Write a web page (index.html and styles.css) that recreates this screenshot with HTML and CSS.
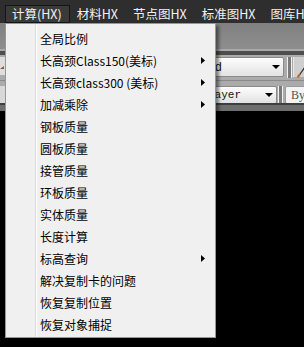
FILE: index.html
```html
<!DOCTYPE html>
<html lang="zh-CN">
<head>
<meta charset="utf-8">
<title>计算(HX)</title>
<link rel="stylesheet" href="styles.css">
</head>
<body>
<div class="app">
  <nav class="menubar">
    <span class="mi active">计算(HX)</span>
    <span class="mi">材料HX</span>
    <span class="mi">节点图HX</span>
    <span class="mi">标准图HX</span>
    <span class="mi">图库HX</span>
  </nav>
  <div class="toolbar">
    <div class="band-top"></div>
    <div class="band-line"></div>
    <div class="band-dark"></div>
    <div class="tb-row row1">
      <span class="left-btn">
        <svg width="6" height="18" viewBox="0 0 6 18"><polygon points="0,11 4,8 4,11" fill="#a0521e"/></svg>
      </span>
      <div class="combo combo1"><span class="ctext">Standard</span><i class="caret"></i></div>
      <div class="sep sep1"></div>
      <div class="tbtn">
        <svg width="12" height="14" viewBox="0 0 12 14"><line x1="2" y1="12" x2="9" y2="2" stroke="#333" stroke-width="1.3"/><line x1="1.5" y1="12.5" x2="4" y2="9" stroke="#c86414" stroke-width="2"/></svg>
      </div>
    </div>
    <div class="tb-row row2">
      <span class="left-box"></span>
      <div class="combo combo2"><span class="ctext mono">Layer</span><i class="caret"></i></div>
      <div class="sep sep2"></div>
      <div class="combo combo3"><span class="ctext serif">ByLayer</span></div>
    </div>
    <div class="band-bottom"></div>
  </div>
  <div class="canvas"></div>

  <div class="dropdown">
    <div class="item">全局比例</div>
    <div class="item">长高颈Class150(美标)<svg class="arrow" width="4" height="7" viewBox="0 0 4 7"><polygon points="0,0 4,3.5 0,7" fill="#000"/></svg></div>
    <div class="item">长高颈class300 (美标)<svg class="arrow" width="4" height="7" viewBox="0 0 4 7"><polygon points="0,0 4,3.5 0,7" fill="#000"/></svg></div>
    <div class="item">加减乘除<svg class="arrow" width="4" height="7" viewBox="0 0 4 7"><polygon points="0,0 4,3.5 0,7" fill="#000"/></svg></div>
    <div class="item">钢板质量</div>
    <div class="item">圆板质量</div>
    <div class="item">接管质量</div>
    <div class="item">环板质量</div>
    <div class="item">实体质量</div>
    <div class="item">长度计算</div>
    <div class="item">标高查询<svg class="arrow" width="4" height="7" viewBox="0 0 4 7"><polygon points="0,0 4,3.5 0,7" fill="#000"/></svg></div>
    <div class="item">解决复制卡的问题</div>
    <div class="item">恢复复制位置</div>
    <div class="item">恢复对象捕捉</div>
  </div>
</div>
</body>
</html>
```
FILE: styles.css
```css
html, body {
  margin: 0;
  padding: 0;
  background: #000;
}
.app {
  position: relative;
  width: 304px;
  height: 347px;
  overflow: hidden;
  background: #000;
  font-family: "Noto Sans CJK SC", "Noto Sans", sans-serif;
}

/* menu bar */
.menubar {
  display: flex;
  align-items: flex-start;
  height: 23px;
  box-sizing: border-box;
  padding-left: 5px;
  background: #2e2e2e;
  white-space: nowrap;
}
.mi {
  flex: none;
  margin-top: 5px;
  height: 18px;
  box-sizing: border-box;
  padding: 0 7px 0 6px;
  border: 1px solid transparent;
  line-height: 16px;
  font-size: 12.5px;
  color: #f2f2f2;
}
.mi.active {
  background: #3a3a3a;
  border-color: #151515;
}

/* toolbar behind */
.toolbar {
  display: flex;
  flex-direction: column;
}
.band-top {
  height: 26px;
  background: linear-gradient(#808080, #8e8e8e);
}
.band-line {
  height: 2px;
  background: #a9a9a9;
}
.band-dark {
  height: 4px;
  background: #4e4e4e;
}
.tb-row {
  display: flex;
  align-items: flex-start;
  background: #ababab;
}
.tb-row > * {
  flex: none;
}
.row1 {
  height: 25px;
  padding-top: 2px;
  box-sizing: border-box;
}
.row2 {
  height: 23px;
  padding-top: 5px;
  box-sizing: border-box;
  border-top: 1px solid #8a8a8a;
}
.left-btn {
  display: block;
  width: 6px;
  height: 18px;
  background: #dedede;
}
.left-box {
  display: block;
  width: 5px;
  height: 18px;
  background: #d8d8d8;
}
.combo {
  display: flex;
  align-items: center;
  justify-content: space-between;
  box-sizing: border-box;
  border: 1px solid #8a8a8a;
  border-radius: 2px;
  background: linear-gradient(#fdfdfd, #e2e2e2);
}
.combo1 {
  margin-left: 161px;
  width: 117px;
  height: 20px;
  padding: 0 3px 0 5px;
}
.combo2 {
  margin-left: 145px;
  width: 127px;
  height: 18px;
  padding: 0 3px 0 57px;
}
.combo3 {
  margin-left: 2px;
  width: 40px;
  height: 18px;
  padding: 0 0 0 5px;
  background: #f4f4f4;
  border-color: #9a9a9a;
  overflow: hidden;
}
.ctext {
  font-family: "Liberation Sans", sans-serif;
  font-size: 12px;
  color: #111;
  white-space: nowrap;
}
.ctext.mono {
  font-family: "Liberation Mono", monospace;
  font-size: 11px;
}
.ctext.serif {
  font-family: "Liberation Serif", serif;
  font-size: 12px;
  color: #555;
}
.caret {
  display: block;
  width: 0;
  height: 0;
  border-left: 4px solid transparent;
  border-right: 4px solid transparent;
  border-top: 4px solid #000;
}
.sep {
  box-sizing: border-box;
  width: 5px;
  border-left: 1px solid #f0f0f0;
  border-right: 1px solid #f0f0f0;
  background: #7a7a7a;
}
.sep1 {
  margin-left: 3px;
  height: 21px;
}
.sep2 {
  margin-left: 1px;
  height: 19px;
}
.tbtn {
  margin-left: 1px;
  width: 20px;
  height: 20px;
  box-sizing: border-box;
  padding: 3px 0 0 2px;
  border-left: 1px solid #e8e8e8;
  background: #cfcfcf;
}
.band-bottom {
  height: 8px;
  box-sizing: border-box;
  border-top: 2px solid #3e3e3e;
  background: #6e6e6e;
}
.canvas {
  height: 236px;
  background: #000;
}

/* dropdown menu */
.dropdown {
  position: absolute;
  left: 5px;
  top: 23px;
  width: 211px;
  box-sizing: border-box;
  padding: 3px 0 2px;
  border: 1px solid #979797;
  background:
    linear-gradient(to right, transparent 29px, #dcdcdc 29px, #dcdcdc 30px, #ffffff 30px, #ffffff 31px, transparent 31px),
    #f0f0f0;
  box-shadow: 3px 3px 3px rgba(0, 0, 0, 0.45);
}
.item {
  display: flex;
  align-items: center;
  justify-content: space-between;
  height: 22px;
  padding: 0 10px 0 34px;
  font-size: 12px;
  color: #000;
  white-space: nowrap;
}
.arrow {
  display: block;
}
```
